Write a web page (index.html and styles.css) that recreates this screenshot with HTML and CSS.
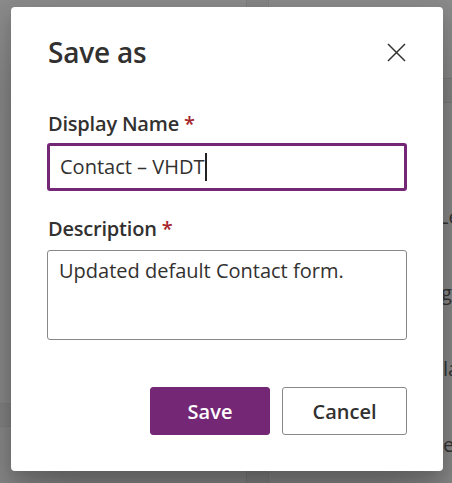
FILE: index.html
```html
<!DOCTYPE html>
<html lang="en">
<head>
<meta charset="utf-8">
<title>Save as</title>
<link rel="stylesheet" href="styles.css">
</head>
<body>
<div class="page">
  <div class="pane-left">
    <div class="left-band"></div>
  </div>
  <div class="divider"></div>
  <div class="pane-right">
    <div class="right-head"></div>
    <div class="right-bar"></div>
    <div class="right-list">
      <div class="item item-1">Le</div>
      <div class="item item-2">g</div>
      <div class="item item-3">la</div>
      <div class="item item-4">e</div>
    </div>
  </div>
</div>

<div class="dialog" role="dialog" aria-labelledby="dlg-title">
  <div class="dialog-header">
    <h2 id="dlg-title" class="dialog-title">Save as</h2>
    <button class="close-btn" aria-label="Close">
      <svg width="19" height="19" viewBox="0 0 19 19" aria-hidden="true">
        <path d="M1 1 L18 18 M18 1 L1 18" stroke="#323130" stroke-width="1.5" fill="none"/>
      </svg>
    </button>
  </div>

  <div class="field field-name">
    <label class="field-label">Display Name <span class="req">*</span></label>
    <div class="text-input focused">Contact – VHDT<span class="caret"></span></div>
  </div>

  <div class="field field-desc">
    <label class="field-label">Description <span class="req">*</span></label>
    <div class="text-area">Updated default Contact form.</div>
  </div>

  <div class="dialog-footer">
    <button class="btn btn-primary">Save</button>
    <button class="btn btn-secondary">Cancel</button>
  </div>
</div>
</body>
</html>
```

FILE: styles.css
```css
* { box-sizing: border-box; }

html, body {
  margin: 0;
  padding: 0;
  width: 452px;
  height: 483px;
  overflow: hidden;
}

body {
  background: #8a8a8a;
  font-family: "Open Sans", "Noto Sans", sans-serif;
  color: #323130;
  position: relative;
}

/* dimmed page behind the dialog */
.page {
  display: flex;
  height: 483px;
  overflow: hidden;
}

.pane-left {
  width: 246px;
  flex-shrink: 0;
  display: flex;
  flex-direction: column;
  padding-top: 403px;
}

.left-band {
  height: 24px;
  flex-shrink: 0;
  background: #848484;
  border-top: 1px solid #808080;
  border-bottom: 1px solid #808080;
}

.divider {
  width: 23px;
  flex-shrink: 0;
  background: #858585;
  border-left: 1px solid #7e7e7e;
  border-right: 1px solid #7e7e7e;
}

.pane-right {
  flex: 1;
  display: flex;
  flex-direction: column;
  overflow: hidden;
}

.right-head {
  height: 78px;
  flex-shrink: 0;
}

.right-bar {
  height: 25px;
  flex-shrink: 0;
  background: #858585;
  border-top: 1px solid #7c7c7c;
  border-bottom: 1px solid #7c7c7c;
}

.right-list {
  display: flex;
  flex-direction: column;
  flex-shrink: 0;
  padding-top: 100px;
  font-size: 20px;
  color: #363636;
}

.item {
  height: 76px;
  line-height: 28px;
  flex-shrink: 0;
}

.item-1 { padding-left: 169px; }
.item-2 { padding-left: 172px; }
.item-3 { padding-left: 174px; }
.item-4 { padding-left: 174px; }

/* dialog */
.dialog {
  position: absolute;
  left: 11px;
  top: 7px;
  width: 432px;
  height: 464px;
  background: #ffffff;
  border-radius: 4px;
  box-shadow: 0 38px 60px rgba(0, 0, 0, 0.22), 0 8px 18px rgba(0, 0, 0, 0.18);
  padding: 25px 36px 36px 37px;
  display: flex;
  flex-direction: column;
}

.dialog-header {
  display: flex;
  align-items: center;
  justify-content: space-between;
  height: 40px;
}

.dialog-title {
  margin: 0;
  font-size: 28px;
  font-weight: 600;
  line-height: 40px;
  color: #323130;
  letter-spacing: -0.2px;
}

.close-btn {
  border: 0;
  background: transparent;
  padding: 0;
  margin: 0 1px 0 0;
  width: 19px;
  height: 19px;
  display: flex;
}

.field {
  display: flex;
  flex-direction: column;
  gap: 5px;
}

.field-name { margin-top: 38px; }
.field-desc { margin-top: 24px; }

.field-label {
  font-size: 20px;
  font-weight: 600;
  line-height: 28px;
  color: #323130;
  letter-spacing: -0.2px;
}

.req {
  color: #a4262c;
}

.text-input {
  height: 48px;
  border: 3px solid #742774;
  border-radius: 3px;
  padding: 0 10px;
  font-size: 20px;
  line-height: 42px;
  color: #323130;
  display: flex;
  align-items: center;
  margin-left: -1px;
}

.caret {
  display: inline-block;
  width: 2px;
  height: 28px;
  background: #222;
  margin-left: 1px;
}

.text-area {
  height: 90px;
  border: 1.5px solid #8a8886;
  border-radius: 3px;
  padding: 6px 11px;
  font-size: 20px;
  line-height: 28px;
  color: #323130;
  margin-left: -1px;
  margin-top: 2px;
}

.dialog-footer {
  margin-top: auto;
  display: flex;
  justify-content: flex-end;
  gap: 12px;
}

.btn {
  height: 48px;
  border-radius: 3px;
  font-family: "Open Sans", "Noto Sans", sans-serif;
  font-size: 20px;
  font-weight: 600;
  padding: 0 24px;
  display: flex;
  align-items: center;
  justify-content: center;
}

.btn-primary {
  width: 120px;
  background: #742774;
  border: 1.5px solid #742774;
  color: #ffffff;
}

.btn-secondary {
  width: 125px;
  background: #ffffff;
  border: 1.5px solid #8a8886;
  color: #323130;
}
```
